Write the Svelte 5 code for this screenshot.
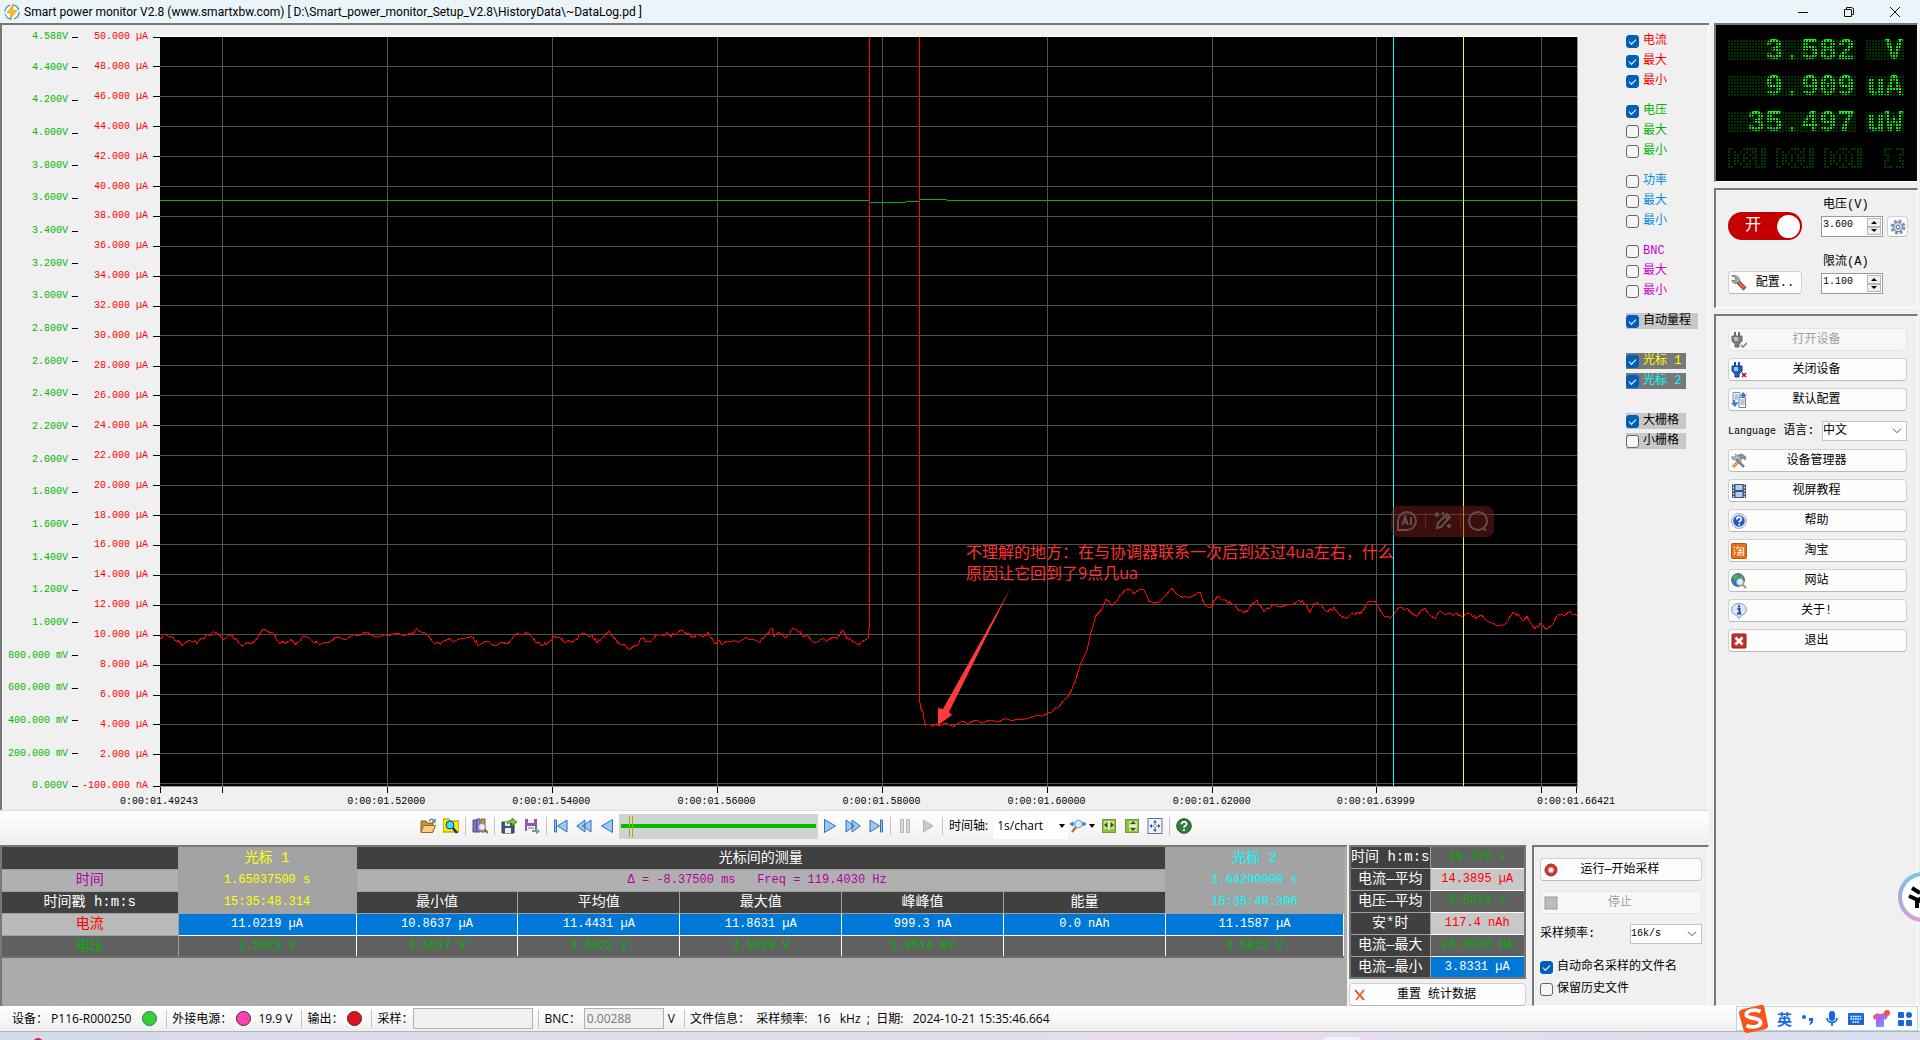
<script lang="ts">
  const voltTicks = [
    4.588, 4.4, 4.2, 4, 3.8, 3.6, 3.4, 3.2, 3, 2.8, 2.6, 2.4, 2.2, 2, 1.8, 1.6, 1.4, 1.2, 1, 0.8,
    0.6, 0.4, 0.2, 0
  ];
  const ampTicks = [...Array.from({ length: 25 }, (_, i) => 50 - i * 2), -0.1];
  const timeTicks = [
    { x: 160, label: '0:00:01.49243' },
    { x: 222, label: '' },
    { x: 387, label: '0:00:01.52000' },
    { x: 552, label: '0:00:01.54000' },
    { x: 717, label: '0:00:01.56000' },
    { x: 882, label: '0:00:01.58000' },
    { x: 1047, label: '0:00:01.60000' },
    { x: 1212, label: '0:00:01.62000' },
    { x: 1376, label: '0:00:01.63999' },
    { x: 1541, label: '' },
    { x: 1576, label: '0:00:01.66421' }
  ];

  const voltY = (v: number) => `${((4.588 - v) / 4.588) * 99.9}%`;
  const ampY = (v: number) => `${((50 - v) / 50.1) * 99.9}%`;
  const timeX = (x: number) => `${((x - 160) / 1417) * 100}%`;

  function voltLabel(v: number) {
    if (v > 0 && v < 1) return `${(v * 1000).toFixed(3)} mV`;
    return `${v.toFixed(3)}V`;
  }

  function ampLabel(v: number) {
    return v < 0 ? '-100.000 nA' : `${v.toFixed(3)} µA`;
  }

  // current samples, chart units
  const before = [
    160, 640, 165, 634, 173, 639, 182, 645, 190, 642, 197, 643, 206, 637, 215, 633, 223, 640, 229,
    635, 236, 640, 242, 646, 253, 643, 263, 631, 273, 633, 278, 643, 285, 643, 291, 641, 295, 646,
    304, 637, 314, 643, 323, 645, 335, 639, 347, 639, 353, 637, 366, 634, 380, 638, 388, 635, 398,
    635, 412, 635, 417, 629, 427, 636, 435, 644, 442, 644, 448, 639, 455, 643, 463, 638, 473, 639,
    478, 645, 488, 643, 496, 646, 508, 643, 516, 636, 526, 633, 532, 639, 541, 646, 548, 644, 555,
    637, 565, 643, 576, 641, 581, 634, 592, 637, 597, 643, 602, 639, 609, 632, 616, 641, 629, 650,
    637, 647, 642, 638, 647, 643, 660, 635, 664, 638, 667, 633, 671, 636, 678, 634, 682, 631, 688,
    634, 693, 638, 698, 635, 706, 637, 708, 634, 715, 644, 718, 641, 723, 646, 727, 642, 733, 641,
    737, 643, 742, 641, 746, 637, 750, 641, 760, 642, 767, 635, 772, 629, 774, 637, 779, 633, 786,
    639, 793, 629, 800, 633, 803, 637, 807, 635, 810, 640, 815, 644, 821, 639, 828, 642, 832, 638,
    837, 639, 843, 632, 847, 639, 852, 641, 858, 647, 864, 640, 868, 639
  ];
  const after = [
    919, 698, 921, 709, 923, 712, 925, 725, 931, 727, 938, 725, 954, 726, 964, 723, 994, 722, 1016,
    720, 1037, 717, 1049, 714, 1058, 708, 1068, 698, 1075, 683, 1081, 665, 1087, 650, 1091, 633,
    1096, 617, 1102, 609, 1106, 600, 1112, 607, 1121, 596, 1129, 589, 1134, 594, 1144, 590, 1149,
    602, 1155, 605, 1166, 597, 1172, 589, 1182, 599, 1190, 597, 1200, 594, 1204, 603, 1210, 609,
    1217, 597, 1226, 602, 1233, 605, 1242, 613, 1247, 612, 1251, 605, 1257, 602, 1264, 612, 1273,
    606, 1287, 607, 1299, 601, 1306, 605, 1310, 612, 1314, 604, 1321, 605, 1327, 612, 1334, 609,
    1344, 619, 1355, 614, 1362, 613, 1369, 601, 1375, 603, 1379, 609, 1385, 617, 1392, 618, 1398,
    608, 1407, 610, 1417, 617, 1425, 609, 1435, 621, 1439, 613, 1450, 615, 1459, 615, 1463, 618,
    1469, 614, 1476, 619, 1482, 617, 1496, 627, 1506, 624, 1513, 613, 1520, 617, 1523, 623, 1527,
    618, 1535, 629, 1540, 625, 1545, 629, 1553, 626, 1557, 617, 1570, 613, 1577, 617
  ];

  // fills in the space between samples with a little sensor noise
  function noisy(values: number[]) {
    const points: string[] = [];
    for (let i = 0; i < values.length - 2; i += 2) {
      const [x1, y1, x2, y2] = values.slice(i, i + 4);
      const steps = Math.max(1, Math.round((x2 - x1) / 2));
      for (let s = 0; s < steps; s++) {
        const x = x1 + ((x2 - x1) * s) / steps;
        const y = y1 + ((y2 - y1) * s) / steps + Math.sin(x * 12.9898) * 1.2;
        points.push(`${x.toFixed(1)},${y.toFixed(1)}`);
      }
    }
    points.push(values.slice(-2).join(','));
    return points.join(' ');
  }

  const currentTrace = `${noisy(before)} 869,630 869,30 919,30 ${noisy(after)}`;

  const channels = [
    { color: 'red', items: [['电流', true], ['最大', true], ['最小', true]] },
    { color: 'green', items: [['电压', true], ['最大', false], ['最小', false]] },
    { color: 'blue', items: [['功率', false], ['最大', false], ['最小', false]] },
    { color: 'magenta', items: [['BNC', false], ['最大', false], ['最小', false]] }
  ] as { color: string; items: [string, boolean][] }[];

  const readings = [
    { value: '  3.582', unit: ' V' },
    { value: '  9.909', unit: 'uA' },
    { value: ' 35.497', unit: 'uW' }
  ];

  // unlit annunciators
  const dimDots = [
    '##...#####.##...##...###.#.##...##...###.####.......###.###',
    '#.#.#.#.##.##...#.#.#.#.##.##...#.#.#.#.#..##.......#.....#',
    '#.##.#.#.#.##...#.##.#.#.#.##...#.##.#.#.#.##.......##...##',
    '#.##.##.##.##...#.##.#.###.##...#.##.#.#.#.##........#...#.',
    '#.##.#.#.#.##...#.##.#.###.##...#.##.#.#.#.##.......##...##',
    '#.#.#.##.#.##...#.#.#.#.#..##...#.#.#.#.##.##.......#.....#',
    '##...###.####...##...###.####...##...###.####.......###.###'
  ];

  const menuTop = [
    { icon: 'plugOff', label: '打开设备', disabled: true },
    { icon: 'plug', label: '关闭设备' },
    { icon: 'pages', label: '默认配置' }
  ];
  const menuBottom = [
    { icon: 'tools', label: '设备管理器' },
    { icon: 'film', label: '视屏教程' },
    { icon: 'help', label: '帮助' },
    { icon: 'tao', label: '淘宝' },
    { icon: 'globe', label: '网站' },
    { icon: 'info', label: '关于!' },
    { icon: 'exit', label: '退出' }
  ];

  const currentRow = ['11.0219 µA', '10.8637 µA', '11.4431 µA', '11.8631 µA', '999.3 nA', '0.0 nAh', '11.1587 µA'];
  const voltageRow = ['3.5823 V', '3.5817 V', '3.5822 V', '3.5828 V', '1.0514 mV', '', '3.5823 V'];

  const stats = [
    { label: '时间 h:m:s', value: '29.375 s', kind: 'dark' },
    { label: '电流—平均', value: '14.3895 µA', kind: 'light' },
    { label: '电压—平均', value: '3.5822 V', kind: 'dark' },
    { label: '安*时', value: '117.4 nAh', kind: 'light' },
    { label: '电流—最大', value: '28.0032 mA', kind: 'dark' },
    { label: '电流—最小', value: '3.8331 µA', kind: 'selected' }
  ];
</script>

{#snippet icon(name: string)}
  <svg class="icon" width="16" height="16" viewBox="0 0 16 16" aria-hidden="true">
    {#if name === 'plug' || name === 'plugOff'}
      {@const on = name === 'plug'}
      <path d="M3 0h2v4H3zM7 0h2v4H7z" fill={on ? '#1c4f9c' : '#6d6d6d'} />
      <path d="M1 4h10v5l-3 3v3H4v-3L1 9z" fill={on ? '#1d62c4' : '#7d7d7d'} stroke={on ? '#123d80' : '#666'} />
      <path d="M3 5h4v4H3z" fill={on ? '#8fc6ff' : '#bbb'} />
      {#if on}
        <path d="M11 11l4 4m0-4l-4 4" stroke="#c00030" stroke-width="1.6" />
      {:else}
        <path d="M10 13l2 2 4-4" stroke="#777" stroke-width="1.4" fill="none" />
      {/if}
    {:else if name === 'pages'}
      <path d="M2 .5h7v10H2z" fill="#f4f8ff" stroke="#7d90b5" />
      <path d="M3.500 3h4M3.500 5h4M3.500 7h3" stroke="#7d90b5" />
      <path d="M8 5.500h6.500v10H8z" fill="#f4f8ff" stroke="#6b80aa" />
      <path d="M9.500 8h4M9.500 10h4M9.500 12h4" stroke="#7d90b5" />
      <path d="M12 0l4 4h-2v2h-3V4H9zM4 15L0 11h2V8h2v3h3z" fill="#3b78d8" />
    {:else if name === 'tools'}
      <path d="M2 14L10 6" stroke="#c9822b" stroke-width="3" />
      <path d="M2 14L10 6" stroke="#ffcf7a" />
      <path d="M7 2l4-1 4 3-1 3-2-2-2 1z" fill="#8593a8" stroke="#4c5a70" stroke-width=".6" />
      <path d="M3 4l10 10" stroke="#75839a" stroke-width="2.600" />
      <path d="M1 3l2 2 2-2-1-2 3 2v3L4 7 1 6z" fill="#b5c2d4" stroke="#56657d" stroke-width=".6" />
    {:else if name === 'film'}
      <path d="M1 1h14v14H1z" fill="#39506e" />
      <path d="M4.500 2h7v5h-7zM4.500 9h7v5h-7z" fill="#a9d0ee" />
      <path d="M2.500 1v14M13.500 1v14" stroke="#dfe9f5" stroke-width="1.4" stroke-dasharray="1.6 1.4" />
    {:else if name === 'help'}
      <circle cx="8" cy="8" r="7.500" fill="#e7ecf5" stroke="#8b9bb8" stroke-width=".8" />
      <circle cx="8" cy="8" r="5.800" fill="#2259c8" />
      <path d="M5.800 6.500c0-3 4.600-3 4.600-.3 0 1.500-2.200 1.500-2.200 3.200M8.200 10.800v1.600" stroke="#fff" stroke-width="1.700" fill="none" />
    {:else if name === 'tao'}
      <rect x=".5" y=".5" width="15" height="15" rx="1" fill="#e8701a" stroke="#b9540e" />
      <path d="M2.500 4l1.500 1M2.500 7l1.500 1M2.500 12l2-3M7 3L5.500 6M6.500 5h6v7l-2 0M7 7.500h4.500M6.500 9.500h5M9 6v5M7 10v2h3" stroke="#ffe9cf" stroke-width="1.200" fill="none" />
    {:else if name === 'globe'}
      <circle cx="7" cy="7" r="6.500" fill="#3d74bd" stroke="#2c5288" stroke-width=".7" />
      <path d="M2 4c2-3 5-3 6-2L7 5 4 6 3 9zM9 2c3 1 4 4 3 6L9 6zM5 9l3 1-1 3z" fill="#5cb33e" />
      <circle cx="9" cy="9" r="3.400" fill="#e3f2ff" stroke="#8ea4bd" />
      <path d="M11.500 11.500l3.500 3.500" stroke="#c88a2e" stroke-width="2" />
    {:else if name === 'info'}
      <path d="M8 .6c4.500 0 7.300 2.600 7.300 6 0 2.800-2 5-4.600 5.700L8 15.500l-2.600-3.200C2.700 11.600.7 9.400.7 6.600.7 3.200 3.500.6 8 .6z" fill="#dce9f7" stroke="#6f93bd" />
      <path d="M8 2.200v2M6.500 5.800h2v4.400M6 10.600h4.200" stroke="#1a3fa8" stroke-width="1.900" fill="none" />
    {:else if name === 'exit'}
      <rect x="1" y="1" width="14" height="14" rx="1" fill="#c9302c" stroke="#8c1a17" />
      <path d="M4.500 4.500l7 7m0-7l-7 7" stroke="#fff" stroke-width="2.600" />
    {:else if name === 'wrench'}
      <path d="M7 7l7 7" stroke="#8a2a18" stroke-width="4" />
      <path d="M7.500 7.500l6 6" stroke="#ff6a3c" stroke-width="2.200" />
      <path d="M1 1l3 1 1 3-2 1-2-1c0 3 3 4 5 3l3-1c0-4-3-7-8-7z" fill="#a9a9a9" stroke="#5a5a5a" stroke-width=".7" />
    {:else if name === 'gear'}
      <circle cx="8" cy="8" r="6" fill="none" stroke="#7f90b3" stroke-width="3" stroke-dasharray="2.700 2" />
      <circle cx="8" cy="8" r="4.800" fill="#c3d0e6" stroke="#6a7ca3" />
      <circle cx="8" cy="8" r="1.800" fill="#fff" stroke="#5c6f96" />
    {:else if name === 'reset'}
      <path d="M3 3l9 10" stroke="#e2401c" stroke-width="1.800" />
      <path d="M12 3L4 13" stroke="#f0603a" stroke-width="2" />
    {:else if name === 'record'}
      <circle cx="8" cy="8" r="6" fill="#cf3a38" stroke="#a32422" />
      <circle cx="8" cy="8" r="2.600" fill="#fff" stroke="#e99" />
    {:else if name === 'stop'}
      <rect x="2" y="2" width="12" height="12" fill="#bcbcbc" stroke="#999" />
    {:else if name === 'open'}
      <path d="M1 3h5l1 2h6v9H1z" fill="#c8913a" stroke="#8a5f1e" />
      <path d="M3.500 7.500h12l-3 7H1z" fill="#f8cd7c" stroke="#96691f" />
      <path d="M9 3c2-3 4-2 5 0m1-2v3h-3" stroke="#5d7a9c" stroke-width="1.400" fill="none" />
    {:else if name === 'find'}
      <path d="M0 1h6l1 2h9v11H0z" fill="#ffee00" stroke="#9c8c00" />
      <path d="M9 9l5 6" stroke="#0a2ea0" stroke-width="2.400" />
      <circle cx="7" cy="7" r="4" fill="#35e4f4" stroke="#123a9c" />
    {:else if name === 'books'}
      <path d="M1 2h4v12H1z" fill="#7f76bd" stroke="#514990" />
      <path d="M5 1h3v13H5z" fill="#9a91cf" stroke="#514990" />
      <path d="M9 1h4v13H9z" fill="#c49a5c" stroke="#8a652c" />
      <circle cx="10" cy="9" r="3.500" fill="#dff0ff" stroke="#7690b4" />
      <path d="M12.500 11.500L16 15" stroke="#a0602a" stroke-width="2" />
    {:else if name === 'export'}
      <path d="M1 4h12v11H1z" fill="#40566f" stroke="#2b3a4c" />
      <path d="M4 4h5v4H4zM4 10h6v5H4z" fill="#e8eef6" />
      <path d="M6 6c0-3 2-4 5-4V0l5 4-5 4V5C9 5 8 5 6 6z" fill="#7cc82c" stroke="#3d7a10" stroke-width=".7" />
    {:else if name === 'save'}
      <path d="M1 1h12v12H1z" fill="#8c5fa0" />
      <path d="M4 1h6v4H4zM3 8h8v5H3z" fill="#f7f2fa" />
      <path d="M4 10h6" stroke="#8c5fa0" />
      <path d="M8 12h4v-2l4 3.500-4 3V14H8z" fill="#6aa892" />
    {:else if name === 'first'}
      <path d="M1.500 2h2v12h-2zM14 2v12L4.500 8z" fill="#9cc8f4" stroke="#2f6fb8" />
    {:else if name === 'rewind'}
      <path d="M9 2v12L.8 8zM15 2v12L6.800 8z" fill="#9cc8f4" stroke="#2f6fb8" />
    {:else if name === 'prev'}
      <path d="M13.500 1.500v13L2.500 8z" fill="#9cc8f4" stroke="#2f6fb8" />
    {:else if name === 'play'}
      <path d="M2.500 1.500v13L13.500 8z" fill="#9cc8f4" stroke="#2f6fb8" />
    {:else if name === 'forward'}
      <path d="M1 2v12L9.200 8zM7 2v12L15.200 8z" fill="#9cc8f4" stroke="#2f6fb8" />
    {:else if name === 'last'}
      <path d="M12.500 2h2v12h-2zM2 2v12L11.500 8z" fill="#9cc8f4" stroke="#2f6fb8" />
    {:else if name === 'pause'}
      <path d="M3.500 1.500h3v13h-3zM9.500 1.500h3v13h-3z" fill="#d8d8d8" stroke="#b4b4b4" />
    {:else if name === 'playOff'}
      <path d="M3.500 2v12L13 8z" fill="#c9c9c9" stroke="#b4b4b4" />
    {:else if name === 'zoom'}
      <path d="M0 6l3-2v4zM16 6l-3-2v4zM2 6h3M11 6h3" fill="#2c86d8" stroke="#2c86d8" />
      <path d="M6 9l-4 5" stroke="#b5713a" stroke-width="2.400" />
      <circle cx="8.500" cy="6" r="3.800" fill="#d8ecfb" stroke="#7893b5" />
    {:else if name === 'fitX' || name === 'fitY'}
      <rect x="1.500" y="1.500" width="13" height="13" fill="#8fc043" stroke="#6f9c36" />
      {#if name === 'fitX'}
        <path d="M3 3h10v8H3z" fill="#c6e08f" />
        <path d="M6.500 4v6L3 7zM9.500 4v6L13 7z" fill="#3a5220" />
        <path d="M8 3v9" stroke="#fff" />
      {:else}
        <path d="M5 3h8v10H5z" fill="#c6e08f" />
        <path d="M6 6h6L9 3zM6 10h6L9 13z" fill="#3a5220" />
        <path d="M5 8h8" stroke="#fff" />
      {/if}
    {:else if name === 'fit'}
      <rect x="1" y=".5" width="14" height="15" fill="#f2f6ff" stroke="#5a71a8" />
      <path d="M8 2l2 2.500H6zM8 14l2-2.500H6zM2.500 8L5 6v4zM13.500 8L11 6v4z" fill="#33477a" />
      <path d="M8 5v2M8 9v2M5.500 8h1.500M9 8h1.500" stroke="#33477a" />
    {:else if name === 'helpGreen'}
      <circle cx="8" cy="8" r="7.300" fill="#2f7d3f" stroke="#1d5229" />
      <path d="M5.500 6.300c0-3.200 5-3.200 5-.4C10.500 7.700 8 7.700 8 9.700M8 11.200v1.700" stroke="#fff" stroke-width="1.800" fill="none" />
    {/if}
  </svg>
{/snippet}

{#snippet tool(name: string, label: string, disabled = false)}
  <button class="tool" aria-label={label} {disabled}>{@render icon(name)}</button>
{/snippet}

{#snippet check(label: string, checked: boolean, kind: string)}
  <label class="check {kind}"><input type="checkbox" {checked} /><span>{label}</span></label>
{/snippet}

{#snippet spinner(id: string, value: string)}
  <span class="spinner">
    <input {id} type="text" {value} />
    <span class="arrows">
      <button aria-label="+"><svg width="6" height="3" viewBox="0 0 6 3"><path d="M0 3l3-3 3 3z" /></svg></button>
      <button aria-label="-"><svg width="6" height="3" viewBox="0 0 6 3"><path d="M0 0l3 3 3-3z" /></svg></button>
    </span>
  </span>
{/snippet}

{#snippet chevron()}
  <svg class="chevron" width="10" height="6" viewBox="0 0 10 6" aria-hidden="true">
    <path d="M1 .7l4 4 4-4" fill="none" stroke="#555" />
  </svg>
{/snippet}

<div class="window">
  <header class="titlebar">
    <svg width="16" height="18" viewBox="0 0 16 18" aria-hidden="true">
      <circle cx="8" cy="9" r="7" fill="#fff" stroke="#4a9fd0" stroke-width="1.400" stroke-dasharray="9 2" />
      <path d="M9.500 1L3 10h4l-1.500 7L13 7.500H8.500z" fill="#ffbf1a" stroke="#e08a00" stroke-width=".6" />
    </svg>
    <h1>Smart power monitor V2.8 (www.smartxbw.com) [ D:\Smart_power_monitor_Setup_V2.8\HistoryData\~DataLog.pd ]</h1>
    <div class="controls">
      <button aria-label="Minimize"><svg width="12" height="12" viewBox="0 0 12 12"><path d="M1 6.500h10" /></svg></button>
      <button aria-label="Restore"><svg width="12" height="12" viewBox="0 0 12 12"><path d="M1.500 3.500h7v7h-7zM3.500 3.500v-2h5l2 1v6h-2" /></svg></button>
      <button aria-label="Close"><svg width="12" height="12" viewBox="0 0 12 12"><path d="M1 1l10 10M11 1L1 11" /></svg></button>
    </div>
  </header>

  <main>
    <div class="left">
      <section class="chart">
        <svg class="axis" width="100%" height="100%">
          {#each voltTicks as v}
            <text class="green" x="66" y={voltY(v)} dy="2" text-anchor="end">{voltLabel(v)}</text>
            <line x1="70" x2="76" y1={voltY(v)} y2={voltY(v)} />
          {/each}
          {#each ampTicks as v}
            <text class="red" x="146" y={ampY(v)} dy="2" text-anchor="end">{ampLabel(v)}</text>
            <line x1="151" x2="158" y1={ampY(v)} y2={ampY(v)} />
          {/each}
        </svg>

        <div class="plot">
          <svg class="scope" width="100%" height="100%">
            {#each ampTicks.slice(1, -1) as v}
              <line class="grid" x1="0" x2="100%" y1={ampY(v)} y2={ampY(v)} />
            {/each}
            {#each timeTicks.slice(1, -1) as t}
              <line class="grid" x1={timeX(t.x)} x2={timeX(t.x)} y1="0" y2="100%" />
            {/each}
            <line class="grid" x1="0" x2="100%" y1={ampY(0)} y2={ampY(0)} />
            <svg width="100%" height="100%" viewBox="160 37 1417 750" preserveAspectRatio="none">
              <polyline class="voltage" points="160,201 869,201 869,203 905,203 906,202 919,202 920,200 947,200 948,201 1577,201" />
              <polyline class="current" points={currentTrace} />
              <path class="arrow" d="M1011 588L949 713l3 3-14 10v-17l5 1z" />
            </svg>
            <line class="cursor2" x1={timeX(1394)} x2={timeX(1394)} y1="0" y2="100%" />
            <line class="cursor1" x1={timeX(1463)} x2={timeX(1463)} y1="0" y2="100%" />
            <text class="note" x={timeX(966)} y="69.500%">不理解的地方：在与协调器联系一次后到达过4ua左右，什么</text>
            <text class="note" x={timeX(966)} y="72.400%">原因让它回到了9点几ua</text>
          </svg>
          <div class="assist">
            <svg width="22" height="22" viewBox="0 0 22 22">
              <path d="M2 20V11a9 9 0 1 1 9 9z" />
              <path d="M6 15l3-8 3 8M7 12.500h4M15 7v8" />
            </svg>
            <span></span>
            <svg width="22" height="22" viewBox="0 0 22 22">
              <path d="M5 18l1-5L15 4l3 3-9 10zM13 6l3 3M5 2v5M2.500 4.500h5M17 14v4M15 16h4M11 2v3" />
            </svg>
            <span></span>
            <svg width="22" height="22" viewBox="0 0 22 22">
              <circle cx="11" cy="11" r="9" /><path d="M16 17l3 4" />
            </svg>
          </div>
        </div>

        <svg class="times" width="100%" height="100%">
          {#each timeTicks as t}
            <line x1={timeX(t.x)} x2={timeX(t.x)} y1="0" y2="6" />
            <text x={timeX(t.x - 1)} y="17" text-anchor="middle">{t.label}</text>
          {/each}
        </svg>

        <div class="channels">
          {#each channels as group}
            <div class="group">
              {#each group.items as [label, on]}
                {@render check(label, on, group.color)}
              {/each}
            </div>
          {/each}
          <div class="group boxed">{@render check('自动量程', true, 'silver wide')}</div>
          <div class="group boxed">
            {@render check('光标 1', true, 'gray yellow')}
            {@render check('光标 2', true, 'gray cyan')}
          </div>
          <div class="group">
            {@render check('大栅格', true, 'silver')}
            {@render check('小栅格', false, 'silver')}
          </div>
        </div>
      </section>

      <nav class="toolbar">
        {@render tool('open', 'Open')}
        {@render tool('find', 'Find')}
        <i></i>
        {@render tool('books', 'Log')}
        <i></i>
        {@render tool('export', 'Export')}
        {@render tool('save', 'Save')}
        <i></i>
        {@render tool('first', 'First')}
        {@render tool('rewind', 'Rewind')}
        {@render tool('prev', 'Previous')}
        <input class="position" type="range" min="0" max="100" value="5" aria-label="Position" />
        {@render tool('play', 'Play')}
        {@render tool('forward', 'Forward')}
        {@render tool('last', 'Last')}
        <i></i>
        {@render tool('pause', 'Pause', true)}
        {@render tool('playOff', 'Resume', true)}
        <i></i>
        <label for="timebase">时间轴:</label>
        <span class="timebase">
          <select id="timebase"><option>1s/chart</option></select>
          <svg width="6" height="4" viewBox="0 0 6 4" aria-hidden="true"><path d="M0 0h6L3 4z" /></svg>
        </span>
        <button class="tool drop" aria-label="Zoom">
          {@render icon('zoom')}
          <svg width="6" height="4" viewBox="0 0 6 4"><path d="M0 0h6L3 4z" /></svg>
        </button>
        {@render tool('fitX', 'Fit width')}
        {@render tool('fitY', 'Fit height')}
        {@render tool('fit', 'Fit all')}
        <i></i>
        {@render tool('helpGreen', 'Help')}
      </nav>

      <div class="bottom">
        <div class="measure">
          <table>
            <colgroup>
              <col class="c-name" /><col class="c-cursor" /><col /><col /><col /><col /><col /><col class="c-cursor" />
            </colgroup>
            <tbody>
              <tr>
                <th></th>
                <td class="cursor yellow">光标 1</td>
                <th colspan="5">光标间的测量</th>
                <td class="cursor cyan">光标 2</td>
              </tr>
              <tr>
                <td class="delta">时间</td>
                <td class="cursor yellow">1.65037500 s</td>
                <td class="delta" colspan="5">Δ = -8.37500 ms&nbsp;&nbsp; Freq = 119.4030 Hz&nbsp;</td>
                <td class="cursor cyan">1.64200000 s</td>
              </tr>
              <tr>
                <th>时间戳 h:m:s</th>
                <td class="cursor yellow">15:35:48.314</td>
                <th>最小值</th>
                <th>平均值</th>
                <th>最大值</th>
                <th>峰峰值</th>
                <th>能量</th>
                <td class="cursor cyan">15:35:48.306</td>
              </tr>
              <tr class="selected">
                <td class="name red">电流</td>
                {#each currentRow as value}<td>{value}</td>{/each}
              </tr>
              <tr class="dark">
                <td class="label">电压</td>
                {#each voltageRow as value}<td>{value}</td>{/each}
              </tr>
            </tbody>
          </table>
        </div>

        <div class="stats">
          <table>
            <tbody>
              {#each stats as s}
                <tr><th>{s.label}</th><td class={s.kind}>{s.value}</td></tr>
              {/each}
            </tbody>
          </table>
          <button class="btn">{@render icon('reset')}<span>重置 统计数据</span></button>
        </div>

        <div class="panel run">
          <button class="btn">{@render icon('record')}<span>运行—开始采样</span></button>
          <button class="btn" disabled>{@render icon('stop')}<span>停止</span></button>
          <div class="rate">
            <label for="rate">采样频率:</label>
            <span class="select small">
              <select id="rate"><option>16k/s</option></select>
              {@render chevron()}
            </span>
          </div>
          {@render check('自动命名采样的文件名', true, 'black')}
          {@render check('保留历史文件', false, 'black')}
        </div>
      </div>
    </div>

    <aside>
      <div class="panel display">
        {#each readings as r}
          <div class="reading"><span class="lcd">{r.value}</span><span class="lcd">{r.unit}</span></div>
        {/each}
        <svg width="178" height="21" viewBox="0 0 178 21" shape-rendering="crispEdges" aria-hidden="true">
          {#each dimDots as row, y}
            {#each row as dot, x}
              {#if dot === '#'}<rect x={x * 3} y={y * 3} width="2" height="2" />{/if}
            {/each}
          {/each}
        </svg>
      </div>

      <div class="panel supply">
        <label class="power"><input type="checkbox" role="switch" checked /><span>开</span></label>
        <div class="field">
          <label for="volt">电压(V)</label>
          <div>{@render spinner('volt', '3.600')}<button class="btn square" aria-label="Settings">{@render icon('gear')}</button></div>
        </div>
        <button class="btn config">{@render icon('wrench')}<span>配置..</span></button>
        <div class="field">
          <label for="limit">限流(A)</label>
          <div>{@render spinner('limit', '1.100')}</div>
        </div>
      </div>

      <div class="panel menu">
        {#each menuTop as m}
          <button class="btn" disabled={m.disabled}>{@render icon(m.icon)}<span>{m.label}</span></button>
        {/each}
        <div class="language">
          <label for="lang"><span>Language</span> 语言:</label>
          <span class="select">
            <select id="lang"><option>中文</option></select>
            {@render chevron()}
          </span>
        </div>
        {#each menuBottom as m}
          <button class="btn">{@render icon(m.icon)}<span>{m.label}</span></button>
        {/each}
      </div>
    </aside>
  </main>

  <footer class="status">
    <span>设备： P116-R000250</span>
    <b class="led lime"></b>
    <i></i>
    <span>外接电源：</span>
    <b class="led pink"></b>
    <span class="volts">19.9 V</span>
    <i></i>
    <span>输出：</span>
    <b class="led crimson"></b>
    <i></i>
    <label for="sampling">采样：</label>
    <input id="sampling" class="sampling" type="text" disabled />
    <i></i>
    <label for="bnc">BNC：</label>
    <input id="bnc" class="bnc" type="text" value="0.00288" disabled />
    <span class="unit">V</span>
    <i></i>
    <span>文件信息：&nbsp; 采样频率:&nbsp;&nbsp; 16&nbsp;&nbsp; kHz&nbsp; ;&nbsp; 日期:&nbsp;&nbsp; 2024-10-21 15:35:46.664</span>
  </footer>
  <div class="desktop"><span class="dot"></span><span class="tab"></span></div>

  <div class="ime">
    <svg class="logo" width="32" height="32" viewBox="0 0 34 32" aria-hidden="true">
      <path d="M5 6L25 1q3-1 4 2l4 20q0 3-3 4L11 31q-3 0-4-3L2 10q0-3 3-4z" fill="#f4561d" />
      <path d="M25 8c-6-3-16-1-15 4 1 4 14 2 15 7 1 5-8 7-15 4" stroke="#fff" stroke-width="4" fill="none" />
    </svg>
    <span>英</span>
    <svg width="16" height="16" viewBox="0 0 16 16"><circle cx="4" cy="6" r="2" /><path d="M9 7h4v3q0 3-4 4l2-4H9z" /></svg>
    <svg width="16" height="16" viewBox="0 0 16 16"><rect x="5" y="0" width="6" height="10" rx="3" /><path d="M3 7c0 6 10 6 10 0M8 11v4" fill="none" stroke="#1668dc" stroke-width="1.800" /></svg>
    <svg width="16" height="16" viewBox="0 0 16 16"><rect x="0" y="2" width="16" height="12" rx="1" /><path d="M2.500 5.500h11M2.500 8h11M4.500 11h7" stroke="#fff" stroke-width="1.300" stroke-dasharray="1.600 .7" /></svg>
    <svg width="18" height="18" viewBox="0 0 18 18">
      <linearGradient id="shirt" x2="1" y2="1"><stop offset="0" stop-color="#ff5a4f" /><stop offset=".5" stop-color="#9b6cff" /><stop offset="1" stop-color="#4fc3ff" /></linearGradient>
      <path d="M1 6l4-3q3 2 6 0l5 3-2 4-2-1v8H4V9l-2 1z" fill="url(#shirt)" /><circle cx="15" cy="3" r="3" fill="#f2553f" />
    </svg>
    <svg width="14" height="14" viewBox="0 0 14 14"><rect width="6" height="6" rx="1" /><rect x="8" width="6" height="6" rx="3" /><rect y="8" width="6" height="6" rx="1" /><rect x="8" y="8" width="6" height="6" rx="1" /></svg>
  </div>

  <div class="badge">
    <svg width="22" height="50" viewBox="0 0 22 50" aria-hidden="true">
      <linearGradient id="ring" x2="0" y2="1"><stop offset="0" stop-color="#7cc8dc" /><stop offset=".6" stop-color="#a9a6e0" /><stop offset="1" stop-color="#e29ad8" /></linearGradient>
      <circle cx="25" cy="25" r="23" fill="#fff" stroke="url(#ring)" stroke-width="4" />
      <path d="M14 16l8 5M11 24l9 4 4-2M19 36v-6l5-3" stroke="#000" stroke-width="4" fill="none" />
    </svg>
  </div>
</div>

<style>
  :global(body) {
    margin: 0;
    background: #f0f0f0;
  }

  .window {
    --mono: 'Liberation Mono', 'Noto Sans CJK SC', monospace;
    --ui: 'Open Sans', 'Noto Sans CJK SC', sans-serif;
    position: relative;
    display: flex;
    flex-direction: column;
    min-height: 100vh;
    overflow: hidden;
    background: #f0f0f0;
    color: #000;
    font: 12px/16px var(--mono);
  }

  .window * {
    box-sizing: border-box;
  }

  button,
  input,
  select {
    margin: 0;
    font: inherit;
    color: inherit;
  }

  svg {
    display: block;
    flex: none;
  }

  .red { color: #f00; fill: #f00; }
  .green { color: #00b800; fill: #00b800; }
  .blue { color: #008ee6; }
  .magenta { color: #d000d0; }
  .yellow { color: #ff0; }
  .cyan { color: #00ffff; }

  .titlebar {
    display: flex;
    align-items: center;
    height: 23px;
    padding-left: 4px;
    gap: 4px;
    background: #ebf4f9;
    font-family: Roboto, 'Noto Sans CJK SC', sans-serif;
  }

  h1 {
    flex: 1;
    margin: 0;
    font-size: 12px;
    font-weight: 400;
    white-space: nowrap;
  }

  .controls {
    display: flex;
    padding-right: 2px;
  }

  .controls button {
    display: grid;
    place-items: center;
    width: 46px;
    height: 20px;
    border: 0;
    background: none;
  }

  .controls path {
    fill: none;
    stroke: #111;
  }

  main {
    display: flex;
    flex: 1;
    gap: 5px;
  }

  .left {
    display: flex;
    flex: 1;
    flex-direction: column;
    min-width: 0;
  }

  .chart {
    display: grid;
    flex: 1;
    grid-template: minmax(560px, 1fr) 23px / 158px minmax(0, 1fr) 131px;
    padding-top: 12px;
    border: 2px solid #787878;
    border-width: 2px 0 0 2px;
    box-shadow: inset -1px 0 #fff;
  }

  .axis,
  .times {
    overflow: visible;
    font-size: 10px;
  }

  .axis line,
  .times line {
    stroke: #000;
    shape-rendering: crispEdges;
  }

  .plot {
    position: relative;
    border: 1px solid #999;
    border-width: 0 1px 1px 0;
    background: #000;
    box-shadow: 0 -1px #fff;
  }

  .scope {
    position: absolute;
    inset: 0;
  }

  .grid {
    stroke: #505050;
    shape-rendering: crispEdges;
  }

  .voltage,
  .current {
    fill: none;
    stroke: #f00;
    shape-rendering: crispEdges;
    vector-effect: non-scaling-stroke;
  }

  .voltage { stroke: #00b400; }
  .arrow { fill: #ff3a3a; }
  .cursor1 { stroke: #ff0; shape-rendering: crispEdges; }
  .cursor2 { stroke: #0ff; shape-rendering: crispEdges; }

  .note {
    fill: #ff3030;
    font: 16px/22px 'Open Sans', 'Noto Sans CJK SC', sans-serif;
  }

  .assist {
    position: absolute;
    top: 62.6%;
    left: 86.9%;
    display: flex;
    align-items: center;
    justify-content: space-between;
    width: 103px;
    height: 31px;
    padding: 0 5px;
    border-radius: 8px;
    background: rgba(120, 30, 24, 0.5);
  }

  .assist svg {
    fill: none;
    stroke: #63504d;
    stroke-width: 2px;
  }

  .assist span {
    width: 1px;
    height: 16px;
    background: #5a2a26;
  }

  .times {
    grid-column: 2;
    grid-row: 2;
  }

  .channels {
    display: flex;
    grid-row: 1 / 3;
    grid-column: 3;
    flex-direction: column;
    gap: 14px;
    margin-top: -4px;
    padding-left: 48px;
  }

  .group {
    display: flex;
    flex-direction: column;
    align-items: flex-start;
    gap: 4px;
  }

  .boxed {
    margin-bottom: 10px;
  }

  .check {
    display: flex;
    align-items: center;
    gap: 4px;
    height: 16px;
    white-space: nowrap;
  }

  .check input {
    width: 13px;
    height: 13px;
    border: 1px solid #666;
    border-radius: 3px;
    background: #f6f6f6;
    appearance: none;
  }

  .check input:checked {
    border-color: #005fb8;
    background: #005fb8;
  }

  .check input:checked::before {
    display: block;
    width: 6px;
    height: 3px;
    margin: 3px auto 0;
    border: solid #fff;
    border-width: 0 0 1px 1px;
    content: '';
    rotate: -45deg;
  }

  .silver,
  .gray {
    width: 60px;
    background: #c8c8c8;
  }

  .gray { background: #787878; }
  .wide { width: 72px; }

  .toolbar {
    display: flex;
    align-items: center;
    height: 35px;
    padding: 0 0 4px 416px;
    border-top: 1px solid #dcdcdc;
    background: linear-gradient(#fff, #eee);
    font: 12px/16px var(--ui);
  }

  .toolbar i,
  .status i {
    width: 1px;
    height: 18px;
    margin: 0 2px 0 3px;
    background: #c4c4c4;
  }

  .toolbar label {
    margin-left: 4px;
  }

  .tool {
    display: flex;
    align-items: center;
    justify-content: center;
    width: 23px;
    height: 24px;
    padding: 0;
    border: 0;
    background: none;
  }

  .drop {
    gap: 3px;
    width: 29px;
  }

  .position {
    width: 199px;
    height: 25px;
    margin-left: 1px;
    background: linear-gradient(#00bc00, #00bc00) center / 195px 4px no-repeat #d2d2d2;
    appearance: none;
  }

  .position::-webkit-slider-thumb {
    width: 4px;
    height: 21px;
    border: 1px solid #a8a800;
    border-width: 0 1px;
    appearance: none;
  }

  .timebase {
    display: flex;
    align-items: center;
    width: 75px;
    height: 25px;
    margin-left: 5px;
    padding-right: 3px;
    background: #fff;
  }

  select {
    flex: 1;
    min-width: 0;
    border: 0;
    background: none;
    appearance: none;
  }

  .timebase select {
    padding: 0 4px;
  }

  .bottom {
    display: flex;
    min-height: 161px;
  }

  .measure {
    flex: 1;
    border: 2px solid #787878;
    border-width: 2px 0 0 2px;
    background: #ababab;
  }

  table {
    width: 100%;
    border-collapse: collapse;
    table-layout: fixed;
    text-align: center;
  }

  .measure table {
    width: calc(100% - 3px);
    border-bottom: 2px solid #707070;
  }

  .c-name { width: 176px; }
  .c-cursor { width: 178px; }

  th,
  td {
    height: 22px;
    padding: 0;
    border: 1px solid #a0a0a0;
    border-width: 0 1px 1px 0;
    font-weight: 400;
    line-height: 20px;
    white-space: nowrap;
  }

  th,
  .label,
  .name,
  .delta:first-child,
  tr:first-child .cursor {
    font-size: 14px;
  }

  th {
    background: #404040;
    color: #fff;
  }

  .cursor { background: #a3a3a3; }
  .delta { background: #b0b0b0; color: #b000a0; }
  .name { background: #bababa; }

  .selected td:not(.name),
  td.selected {
    border-color: #fff;
    background: #0078d7;
    color: #fff;
  }

  .dark td,
  td.dark {
    border-color: #fff;
    background: #606060;
    color: #00b400;
  }

  .dark .label {
    border-color: #a0a0a0;
  }

  td.light {
    border-color: #fff;
    background: #c8c8c8;
    color: #f00;
  }

  .stats {
    display: flex;
    flex-direction: column;
    justify-content: space-between;
    width: 177px;
    margin: 0 6px 0 2px;
  }

  .stats table {
    border: 2px solid #787878;
  }

  .stats th {
    width: 80px;
  }

  .btn {
    display: flex;
    align-items: center;
    width: 100%;
    height: 23px;
    padding: 0 2px;
    border: 1px solid #d0d0d0;
    border-bottom-color: #b8b8b8;
    border-radius: 4px;
    background: #fdfdfd;
  }

  .btn span {
    flex: 1;
    padding-right: 18px;
    text-align: center;
    white-space: nowrap;
  }

  .btn:disabled {
    border-color: #e6e6e6;
    background: #f7f7f7;
    color: #a0a0a0;
  }

  .panel {
    border: 2px solid #787878;
    border-right: 1px solid #fff;
    border-bottom: 1px solid #fff;
  }

  .run {
    display: flex;
    flex-direction: column;
    align-items: flex-start;
    width: 177px;
    padding: 11px 6px 0;
  }

  .run .btn {
    margin-bottom: 10px;
  }

  .rate,
  .language {
    display: flex;
    align-items: center;
    justify-content: space-between;
    width: 100%;
    margin-bottom: 15px;
  }

  .run .check {
    margin-bottom: 6px;
  }

  .select {
    display: flex;
    align-items: center;
    width: 85px;
    height: 20px;
    padding-right: 4px;
    border: 1px solid #c4c4c4;
    background: #fff;
  }

  .small {
    width: 72px;
    font-size: 10px;
  }

  aside {
    display: flex;
    flex-direction: column;
    gap: 6px;
    width: 206px;
    padding-right: 2px;
  }

  .display {
    display: flex;
    flex-direction: column;
    gap: 15px;
    height: 159px;
    padding: 15px 12px 0;
    background: #000;
  }

  .display rect {
    fill: #003c00;
  }

  .reading {
    display: flex;
    gap: 10px;
  }

  /* dot matrix: lit text seen through a 3px mesh */
  .lcd {
    position: relative;
    height: 21px;
    padding: 0 1px;
    background: #003000;
    color: #0f0;
    font: 700 30px/23px 'Liberation Mono', monospace;
    white-space: pre;
  }

  .lcd::after {
    position: absolute;
    inset: 0;
    background:
      linear-gradient(#000 1px, transparent 1px) 0 2px / 3px 3px,
      linear-gradient(90deg, #000 1px, transparent 1px) 2px 0 / 3px 3px;
    content: '';
  }

  .supply {
    display: grid;
    grid-template-columns: 74px 1fr;
    align-content: start;
    align-items: end;
    gap: 17px 19px;
    height: 120px;
    padding: 7px 6px 0 12px;
  }

  .power {
    display: flex;
    align-items: center;
    width: 74px;
    height: 28px;
    margin-bottom: -3px;
    padding: 0 2px 0 17px;
    border-radius: 14px;
    background: #c40000;
    color: #fff;
    font-size: 16px;
  }

  .power input {
    order: 1;
    width: 23px;
    height: 23px;
    margin-left: auto;
    border-radius: 50%;
    background: #fff;
    appearance: none;
  }

  .field {
    display: flex;
    flex-direction: column;
    gap: 3px;
  }

  .field label {
    padding-left: 2px;
  }

  .field div {
    display: flex;
    align-items: center;
    gap: 4px;
  }

  .spinner {
    display: flex;
    width: 62px;
    height: 21px;
    border: 1px solid #999;
    background: #fff;
    font-size: 10px;
  }

  .spinner input {
    flex: 1;
    min-width: 0;
    padding: 0 1px 4px;
    border: 0;
    background: none;
  }

  .arrows {
    display: grid;
    width: 16px;
    padding: 1px;
  }

  .arrows button {
    display: grid;
    place-items: center;
    padding: 0;
    border: 1px solid #b8b8b8;
    background: #f0f0f0;
  }

  .square {
    justify-content: center;
    width: 21px;
    height: 21px;
  }

  .config span {
    padding: 0 0 0 4px;
  }

  .menu {
    display: flex;
    flex: 1;
    flex-direction: column;
    gap: 7px;
    padding: 12px 10px 0 12px;
  }

  .language {
    margin: 3px 0 1px;
  }

  .language label {
    white-space: pre;
  }

  .language label span {
    font-size: 10px;
  }

  .status {
    display: flex;
    align-items: center;
    height: 26px;
    padding-left: 12px;
    border-bottom: 1px solid #b4b4b4;
    background: linear-gradient(#fff, #f0f0f0);
    font: 12px/16px var(--ui);
    white-space: nowrap;
  }

  .status i {
    margin: 0 5px 0 9px;
  }

  .status input {
    height: 21px;
    padding: 0 2px;
    border: 1px solid #b0b0b0;
    background: #f0f0f0;
    color: #777;
  }

  .status input + i {
    margin-left: 5px;
  }

  .sampling { width: 120px; }
  .status .bnc { width: 80px; margin-left: 3px; }
  .unit { margin-left: 4px; }
  .volts { margin-left: 7px; }

  .led {
    width: 15px;
    height: 15px;
    margin-left: 4px;
    border: 1px solid #333;
    border-radius: 50%;
    background: #e01020;
  }

  .lime { margin-left: 11px; background: #3ccc3c; border-color: #184; }
  .pink { background: #ff40b0; }

  .desktop {
    display: flex;
    height: 8px;
    overflow: hidden;
    background: linear-gradient(90deg, #d5dbe9, #e2dcec 50%, #eadcf0 65%, #d9deec);
  }

  .dot {
    width: 10px;
    height: 10px;
    margin: 6px 0 0 33px;
    border-radius: 50%;
    background: #c8303a;
  }

  .tab {
    width: 38px;
    height: 10px;
    margin: 5px 0 0 1280px;
    border-radius: 4px;
    background: #f4f0fa;
  }

  .ime {
    position: absolute;
    right: 2px;
    bottom: 9px;
    display: flex;
    align-items: center;
    gap: 8px;
    height: 25px;
    padding-right: 5px;
    border: 1px solid #b8d4f0;
    background: #fff;
    color: #1668dc;
    fill: #1668dc;
    font: 700 15px/20px 'Noto Sans CJK SC', sans-serif;
  }

  .badge {
    position: absolute;
    right: 0;
    bottom: 118px;
  }
</style>
